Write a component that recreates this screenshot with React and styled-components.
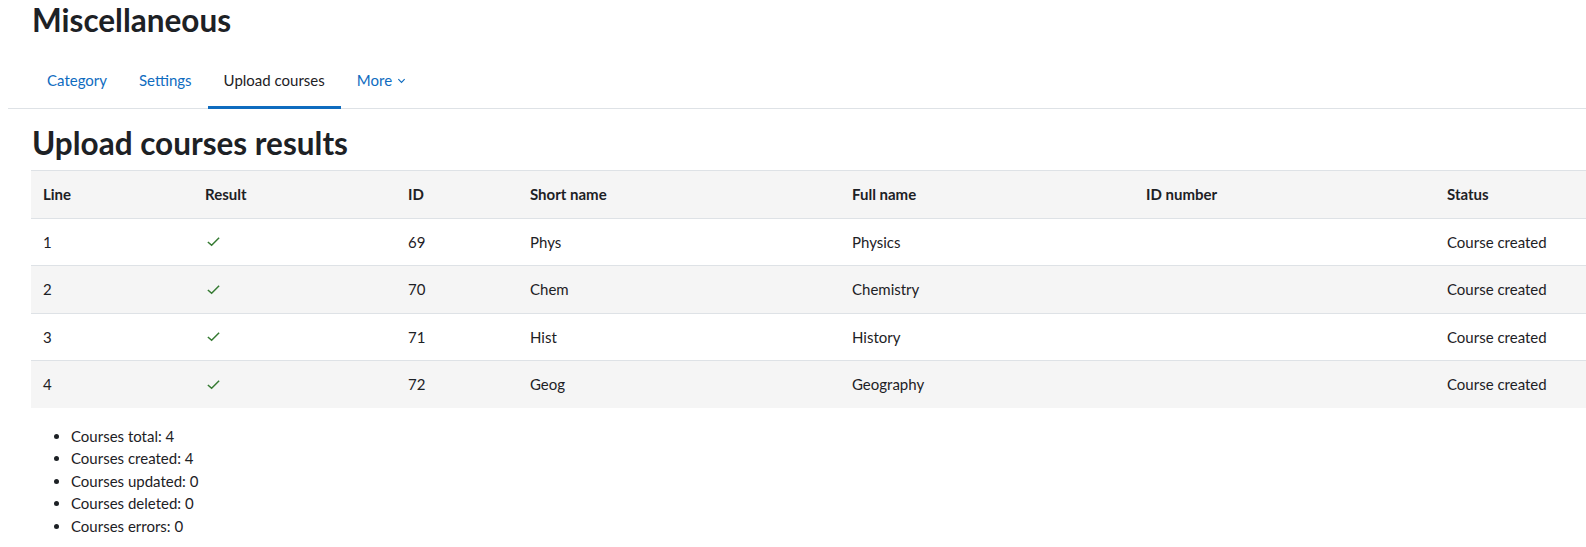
import React from "react";
import styled, { createGlobalStyle } from "styled-components";

const Global = createGlobalStyle`
  html, body { margin: 0; padding: 0; background: #fff; overflow: hidden; }
  body { font-family: "Lato", "Noto Sans", sans-serif; color: #1d2125; font-size: 15px; }
`;

const Page = styled.div`
  padding-left: 8px;
  width: 2000px;
`;

const Header = styled.div`
  padding: 1px 0 0 24px;
`;

const Title = styled.h1`
  margin: 0;
  font-size: 31.5px;
  line-height: 38px;
  font-weight: 700;
`;

const Nav = styled.ul`
  list-style: none;
  display: flex;
  margin: 14px 0 0;
  padding: 0 0 0 23px;
  border-bottom: 1px solid #dee2e6;
`;

const NavLink = styled.li`
  padding: 16px 16px 14.5px;
  line-height: 22.5px;
  font-size: 15px;
  color: ${(p) => (p.$active ? "#1d2125" : "#0f6cbf")};
  border-bottom: 3px solid ${(p) => (p.$active ? "#0f6cbf" : "transparent")};
  margin-bottom: -1px;
  display: flex;
  align-items: center;
  gap: 5px;
`;

const Content = styled.div`
  padding-left: 23px;
`;

const SubTitle = styled.h2`
  margin: 15px 0 8px 1px;
  font-size: 31.5px;
  line-height: 38px;
  font-weight: 700;
`;

const Table = styled.table`
  border-collapse: collapse;
  font-size: 15px;
  line-height: 22.5px;
`;

const Th = styled.th`
  text-align: left;
  font-weight: 700;
  padding: 12px;
  width: ${(p) => p.$w - 24}px;
  min-width: ${(p) => p.$w - 24}px;
  border-top: 1px solid #dee2e6;
  border-bottom: 1px solid #dee2e6;
  background: #f5f5f5;
`;

const Tr = styled.tr`
  background: ${(p) => (p.$striped ? "#f5f5f5" : "#fff")};
`;

const Td = styled.td`
  padding: 12px;
  border-top: 1px solid #dee2e6;
  vertical-align: middle;
`;

const Check = styled.svg`
  width: 15px;
  height: 15px;
  display: block;
  margin-left: 1px;
`;

const Summary = styled.ul`
  margin: 17px 0 0;
  padding-left: 40px;
  line-height: 22.5px;
`;

const cols = [162, 203, 122, 322, 294, 301, 293];
const heads = ["Line", "Result", "ID", "Short name", "Full name", "ID number", "Status"];
const rows = [
  ["1", "69", "Phys", "Physics"],
  ["2", "70", "Chem", "Chemistry"],
  ["3", "71", "Hist", "History"],
  ["4", "72", "Geog", "Geography"],
];

const Chevron = () => (
  <svg width="9" height="9" viewBox="0 0 10 10" fill="none" stroke="#0f6cbf" strokeWidth="1.3">
    <path d="M1.5 3.5 L5 7 L8.5 3.5" />
  </svg>
);

export default function App() {
  return (
    <Page>
      <Global />
      <Header>
        <Title>Miscellaneous</Title>
      </Header>
      <Nav>
        <NavLink>Category</NavLink>
        <NavLink>Settings</NavLink>
        <NavLink $active>Upload courses</NavLink>
        <NavLink>More <Chevron /></NavLink>
      </Nav>
      <Content>
        <SubTitle>Upload courses results</SubTitle>
        <Table>
          <thead>
            <tr>
              {heads.map((h, i) => (
                <Th key={h} $w={cols[i]}>{h}</Th>
              ))}
            </tr>
          </thead>
          <tbody>
            {rows.map((r, i) => (
              <Tr key={r[0]} $striped={i % 2 === 1}>
                <Td>{r[0]}</Td>
                <Td>
                  <Check viewBox="0 0 16 16" fill="none" stroke="#357a32" strokeWidth="1.6">
                    <path d="M2 8.5 L6 12 L14 4" />
                  </Check>
                </Td>
                <Td>{r[1]}</Td>
                <Td>{r[2]}</Td>
                <Td>{r[3]}</Td>
                <Td></Td>
                <Td>Course created</Td>
              </Tr>
            ))}
          </tbody>
        </Table>
        <Summary>
          <li>Courses total: 4</li>
          <li>Courses created: 4</li>
          <li>Courses updated: 0</li>
          <li>Courses deleted: 0</li>
          <li>Courses errors: 0</li>
        </Summary>
      </Content>
    </Page>
  );
}
